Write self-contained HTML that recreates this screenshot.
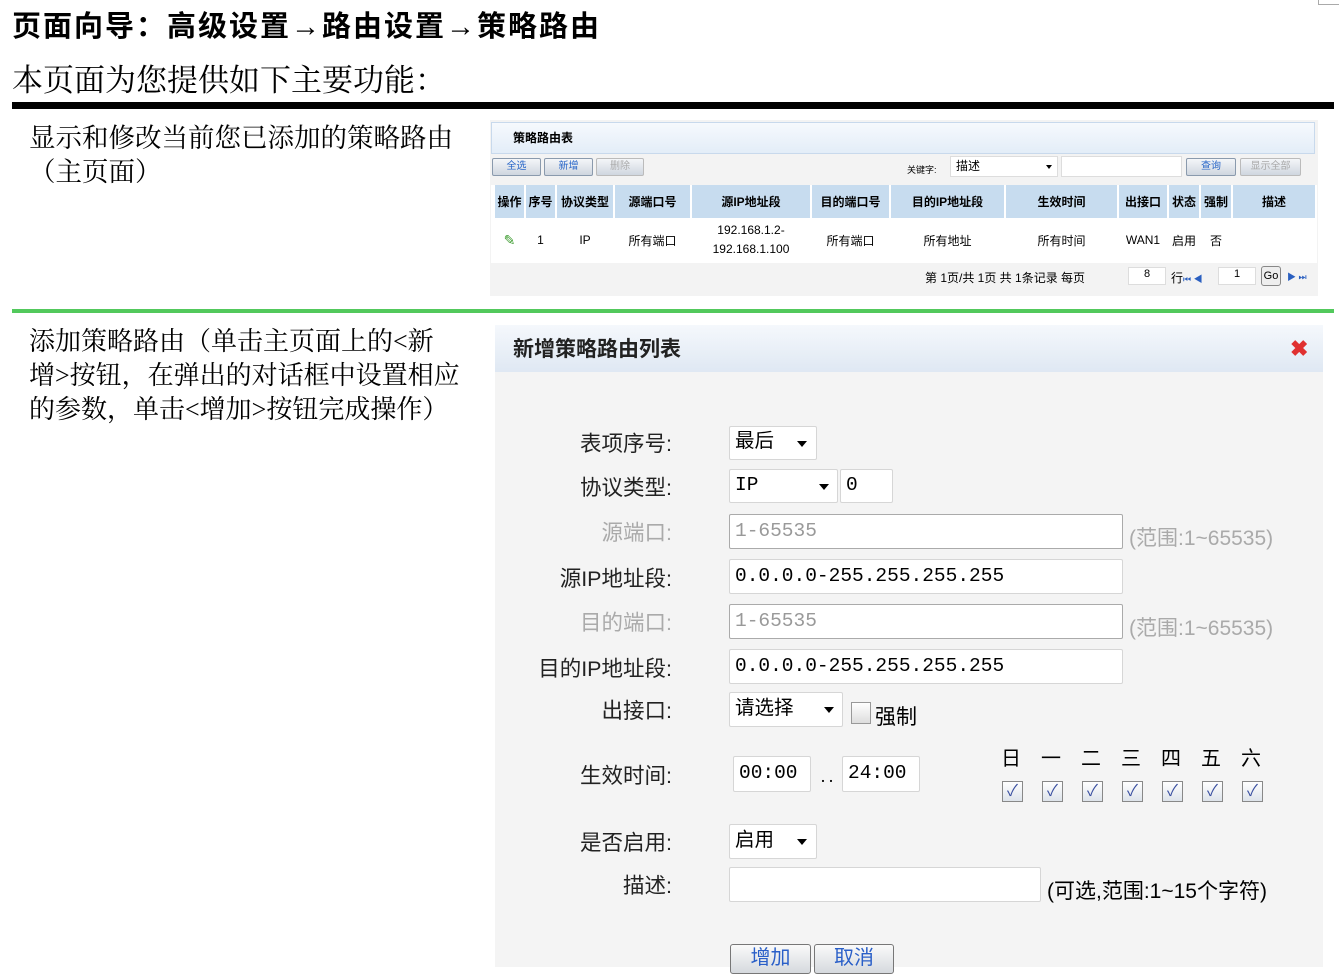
<!DOCTYPE html>
<html><head><meta charset="utf-8"><style>
*{margin:0;padding:0;box-sizing:border-box}
body{width:1339px;height:967px;background:#fff;position:relative;overflow:hidden;font-family:"Liberation Sans","Noto Sans CJK SC",sans-serif;color:#000}
.a{position:absolute;white-space:nowrap}
.serif{font-family:"Liberation Serif","Noto Serif CJK SC",serif}
.btn{position:absolute;height:18px;border:1px solid #8a9aad;border-radius:2px;background:linear-gradient(#f4f6f9,#cfd6df);font-size:10px;color:#2a67c8;text-align:center;line-height:16px}
th,td{font-size:12px;text-align:center}
.lbl{position:absolute;right:calc(1339px - 672px);font-size:21.5px;color:#222;text-align:right;white-space:nowrap}
.in{position:absolute;background:#fff;border:1px solid #d6d6d6;border-radius:2px;font-size:19.5px;font-family:"Liberation Mono","Noto Sans CJK SC",monospace;padding-left:5px;white-space:nowrap}
.tri{position:absolute;width:0;height:0;border-left:5px solid transparent;border-right:5px solid transparent;border-top:6px solid #000}
.cb{position:absolute;width:21px;height:21px;border:1px solid #888;background:linear-gradient(#fff,#dde3ea);color:#3a4fa0;font-size:16px;text-align:center;line-height:19px}
</style></head><body>
<div class="a" style="left:12px;top:3px;font-size:29px;font-weight:bold;letter-spacing:2px">页面向导：高级设置→路由设置→策略路由</div>
<div class="a serif" style="left:12px;top:55px;font-size:31px">本页面为您提供如下主要功能：</div>
<div class="a" style="left:1318px;top:0;width:21px;height:5px;border:1px solid #aaa;border-top:none;border-right:none"></div>
<div class="a" style="left:12px;top:102px;width:1322px;height:7px;background:#000"></div>
<div class="a serif" style="left:29px;top:121px;font-size:26.5px;line-height:34px">显示和修改当前您已添加的策略路由<br>（主页面）</div>
<div class="a" style="left:12px;top:309px;width:1322px;height:4px;background:#52c95c"></div>
<div class="a serif" style="left:29px;top:325px;font-size:26px;line-height:34px">添加策略路由（单击主页面上的&lt;新<br>增&gt;按钮，在弹出的对话框中设置相应<br>的参数，单击&lt;增加&gt;按钮完成操作）</div>

<div class="a" style="left:490px;top:120px;width:828px;height:176px;background:#f3f3f3"></div>
<div class="a" style="left:491px;top:122px;width:824px;height:32px;background:linear-gradient(#f6f9fd,#e3edf8);border:1px solid #c8d9ec"></div>
<div class="a" style="left:513px;top:129px;font-size:12px;font-weight:bold">策略路由表</div>
<div class="btn" style="left:492px;top:158px;width:49px">全选</div>
<div class="btn" style="left:544px;top:158px;width:49px">新增</div>
<div class="btn" style="left:596px;top:158px;width:48px;color:#aaa;border-color:#bbb">删除</div>
<div class="a" style="left:907px;top:163px;font-size:9px">关键字:</div>
<div class="a" style="left:950px;top:156px;width:108px;height:21px;background:#fff;border:1px solid #ddd;font-size:12px;padding-left:5px;line-height:18px">描述</div>
<div class="tri" style="left:1046px;top:165px;border-width:4px 3px 0;"></div>
<div class="a" style="left:1061px;top:156px;width:121px;height:21px;background:#fff;border:1px solid #ddd"></div>
<div class="btn" style="left:1186px;top:158px;width:50px">查询</div>
<div class="btn" style="left:1240px;top:158px;width:61px;color:#aaa;border-color:#bbb">显示全部</div>
<div class="a" style="left:491px;top:185px;width:826px;height:78px;background:#fff"></div>
<table class="a" style="left:493px;top:185px;border-collapse:separate;border-spacing:2px 0;width:824px">
<tr style="height:33px;background:#c7dcef">
<th style="width:29px;background:#c7dcef">操作</th><th style="width:29px;background:#c7dcef">序号</th><th style="width:56px;background:#c7dcef">协议类型</th><th style="width:75px;background:#c7dcef">源端口号</th><th style="width:118px;background:#c7dcef">源IP地址段</th><th style="width:77px;background:#c7dcef">目的端口号</th><th style="width:113px;background:#c7dcef">目的IP地址段</th><th style="width:111px;background:#c7dcef">生效时间</th><th style="width:48px;background:#c7dcef">出接口</th><th style="width:30px;background:#c7dcef">状态</th><th style="width:30px;background:#c7dcef">强制</th><th style="background:#c7dcef">描述</th></tr>
<tr style="height:44px;background:#fff"><td style="color:#3a9a2c;font-size:14px">✎</td><td>1</td><td>IP</td><td>所有端口</td><td style="line-height:19px">192.168.1.2-<br>192.168.1.100</td><td>所有端口</td><td>所有地址</td><td>所有时间</td><td>WAN1</td><td>启用</td><td>否</td><td></td></tr>
</table>
<div class="a" style="left:925px;top:269px;font-size:12px">第 1页/共 1页 共 1条记录 每页</div>
<div class="a" style="left:1128px;top:267px;width:38px;height:18px;background:#fff;border:1px solid #ddd;font-size:11px;text-align:center">8</div>
<div class="a" style="left:1171px;top:269px;font-size:12px">行<span style="color:#2a5fc0;font-size:9px">⏮ ◀</span></div>
<div class="a" style="left:1218px;top:267px;width:38px;height:18px;background:#fff;border:1px solid #ddd;font-size:11px;text-align:center">1</div>
<div class="a" style="left:1261px;top:266px;width:20px;height:20px;border:1px solid #888;border-radius:3px;background:#eee;font-size:11px;text-align:center;line-height:18px">Go</div>
<div class="a" style="left:1287px;top:270px;font-size:9px;color:#2a5fc0">▶ ⏭</div>

<div class="a" style="left:495px;top:325px;width:828px;height:642px;background:#f4f4f4"></div>
<div class="a" style="left:495px;top:325px;width:828px;height:47px;background:linear-gradient(#f5f8fc,#dfe8f3)"></div>
<div class="a" style="left:513px;top:333px;font-size:21px;font-weight:bold;color:#222">新增策略路由列表</div>
<div class="a" style="left:1290px;top:336px;font-size:22px;font-weight:bold;color:#e03030">✖</div>

<div class="lbl" style="top:427px">表项序号:</div>
<div class="in" style="left:729px;top:426px;width:88px;height:34px;line-height:31px">最后</div><div class="tri" style="left:797px;top:441px"></div>
<div class="lbl" style="top:471px">协议类型:</div>
<div class="in" style="left:729px;top:469px;width:109px;height:34px;line-height:31px">IP</div><div class="tri" style="left:819px;top:484px"></div>
<div class="in" style="left:840px;top:469px;width:53px;height:34px;line-height:31px">0</div>
<div class="lbl" style="top:516px;color:#aaa">源端口:</div>
<div class="in" style="left:729px;top:514px;width:394px;height:35px;line-height:32px;color:#999;border-color:#aaa">1-65535</div>
<div class="a" style="left:1129px;top:522px;font-size:21px;color:#aaa">(范围:1~65535)</div>
<div class="lbl" style="top:562px">源IP地址段:</div>
<div class="in" style="left:729px;top:559px;width:394px;height:35px;line-height:32px">0.0.0.0-255.255.255.255</div>
<div class="lbl" style="top:606px;color:#aaa">目的端口:</div>
<div class="in" style="left:729px;top:604px;width:394px;height:35px;line-height:32px;color:#999;border-color:#aaa">1-65535</div>
<div class="a" style="left:1129px;top:612px;font-size:21px;color:#aaa">(范围:1~65535)</div>
<div class="lbl" style="top:652px">目的IP地址段:</div>
<div class="in" style="left:729px;top:649px;width:394px;height:35px;line-height:32px">0.0.0.0-255.255.255.255</div>
<div class="lbl" style="top:694px">出接口:</div>
<div class="in" style="left:729px;top:692px;width:114px;height:35px;line-height:32px">请选择</div><div class="tri" style="left:824px;top:707px"></div>
<div class="a" style="left:851px;top:702px;width:20px;height:22px;border:1px solid #999;background:linear-gradient(#fff,#ddd)"></div>
<div class="a" style="left:875px;top:701px;font-size:21px">强制</div>
<div class="lbl" style="top:759px">生效时间:</div>
<div class="in" style="left:733px;top:756px;width:78px;height:36px;line-height:33px">00:00</div>
<div class="a" style="left:819px;top:768px;font-size:16px">‥</div>
<div class="in" style="left:842px;top:756px;width:78px;height:36px;line-height:33px">24:00</div>
<div class="a" style="left:1001px;top:742px;font-size:20px;word-spacing:0;letter-spacing:20px">日一二三四五六</div>
<div class="cb" style="left:1002px;top:781px">✓</div><div class="cb" style="left:1042px;top:781px">✓</div><div class="cb" style="left:1082px;top:781px">✓</div><div class="cb" style="left:1122px;top:781px">✓</div><div class="cb" style="left:1162px;top:781px">✓</div><div class="cb" style="left:1202px;top:781px">✓</div><div class="cb" style="left:1242px;top:781px">✓</div>
<div class="lbl" style="top:826px">是否启用:</div>
<div class="in" style="left:729px;top:824px;width:88px;height:35px;line-height:32px">启用</div><div class="tri" style="left:797px;top:839px"></div>
<div class="lbl" style="top:869px">描述:</div>
<div class="in" style="left:729px;top:867px;width:312px;height:35px"></div>
<div class="a" style="left:1047px;top:875px;font-size:21px">(可选,范围:1~15个字符)</div>
<div class="a" style="left:730px;top:944px;width:81px;height:30px;border:1px solid #777;border-radius:3px;background:linear-gradient(#fafafa,#d5d9de);color:#2a5fc8;font-size:20px;text-align:center;line-height:26px">增加</div>
<div class="a" style="left:814px;top:944px;width:80px;height:30px;border:1px solid #777;border-radius:3px;background:linear-gradient(#fafafa,#d5d9de);color:#2a5fc8;font-size:20px;text-align:center;line-height:26px">取消</div>
</body></html>
